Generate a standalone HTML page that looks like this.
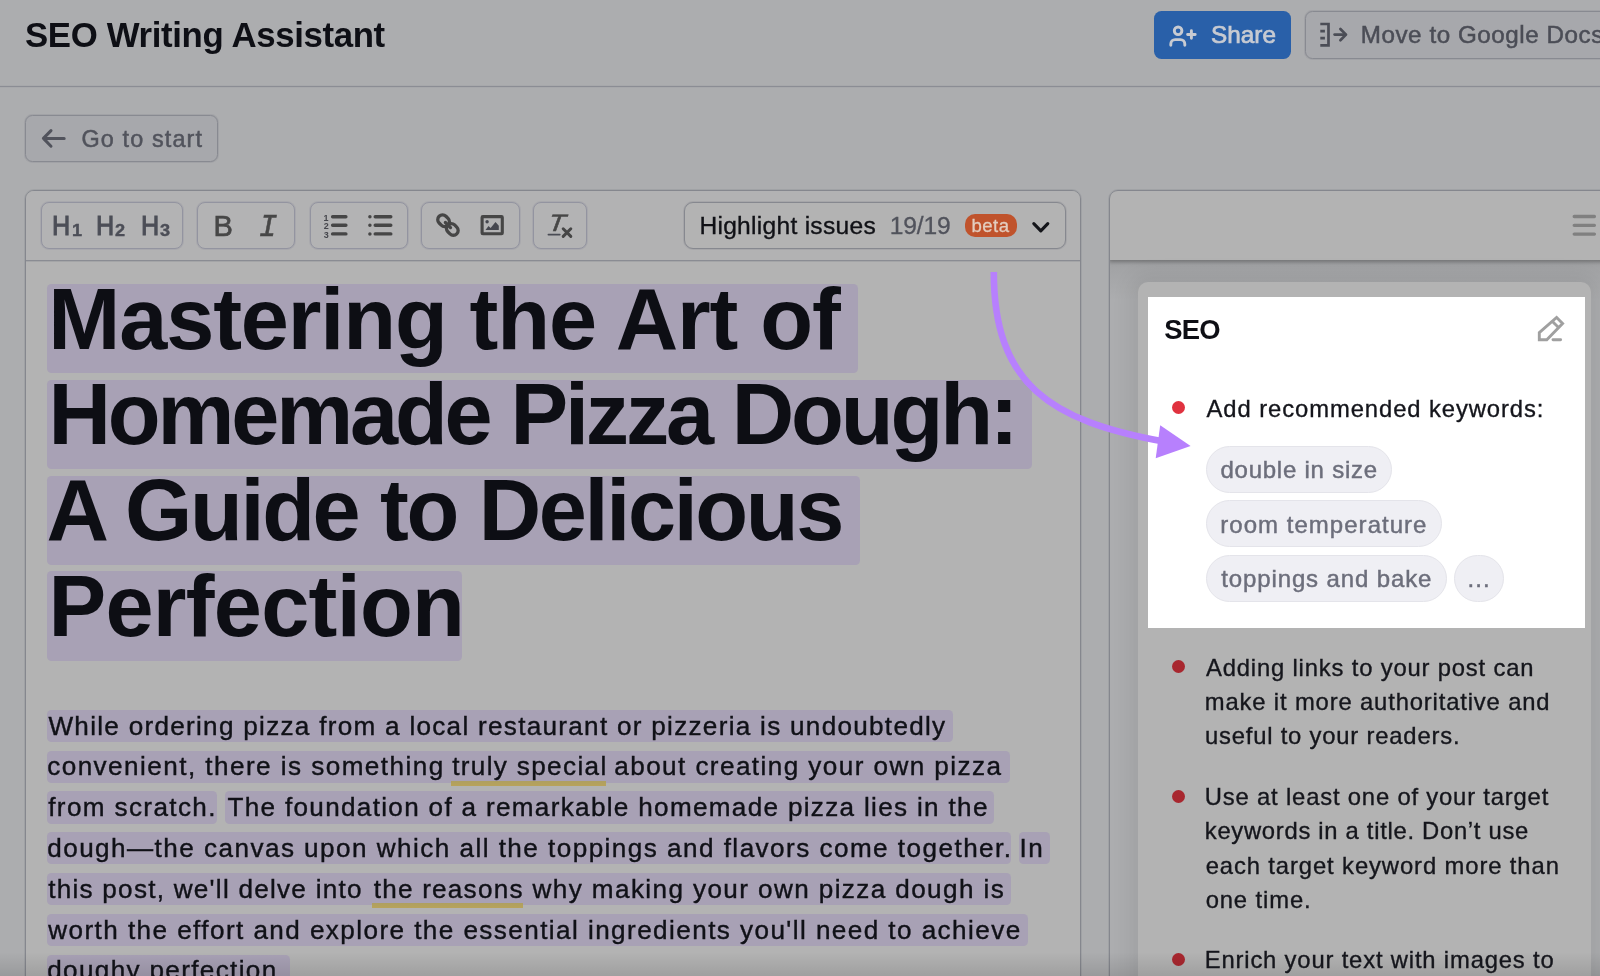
<!DOCTYPE html>
<html lang="en">
<head>
<meta charset="utf-8">
<title>SEO Writing Assistant</title>
<style>
*{box-sizing:border-box;margin:0;padding:0}
html,body{width:1600px;height:976px;overflow:hidden}
body{background:#acadaf;font-family:"Liberation Sans",sans-serif;color:#101117;position:relative}
.abs{position:absolute}
.t{position:absolute;white-space:nowrap}
#txt{position:absolute;left:0;top:0;width:1600px;height:976px;will-change:transform}
svg{position:absolute;overflow:visible}
#hline{left:0;top:86px;width:1600px;height:1px;background:#8b8d94;box-shadow:0 0 0 0.5px rgba(139,141,148,0.3)}
.btn{position:absolute;border:1px solid #888a91;border-radius:7.5px;box-shadow:0 0 0 1px rgba(120,122,130,0.2)}
#share{left:1154px;top:10.8px;width:137px;height:47.8px;background:#2960a9;border:none;box-shadow:none}
#gdocs{left:1305px;top:10.8px;width:320px;height:47.8px;background:#a7a8ac}
#gostart{left:25px;top:114.8px;width:192.8px;height:47.4px;background:#a7a8ac}

#editor{left:25px;top:190px;width:1056px;height:800px;border:1px solid #85878e;border-radius:9px;background:#b3b3b3;overflow:hidden;box-shadow:0 0 0 1px rgba(120,122,130,0.22)}
#toolbar{left:0;top:0;width:100%;height:70px;background:#b2b2b3;border-bottom:1px solid #8a8c93;box-shadow:0 1px 0 rgba(120,122,130,0.25)}
.grp{position:absolute;top:201.8px;height:47.2px;border:1px solid #9394a0;border-radius:8px;background:#b3b3b4;box-shadow:0 0 0 1px rgba(146,147,160,0.3)}
#dd{position:absolute;left:684px;top:202px;width:382px;height:47px;border:1px solid #86888f;box-shadow:0 0 0 1px rgba(120,122,130,0.2);border-radius:9px;background:#b3b3b3}
#beta{position:absolute;left:965px;top:214px;width:52px;height:23.2px;border-radius:10px;background:#c0532c}

.hl{position:absolute;background:#a8a1b5;border-radius:4.5px;height:89.4px;left:47px}
.pl{position:absolute;background:#a8a1b5;border-radius:4.5px;height:32.3px}
.ul{position:absolute;height:5px;background:linear-gradient(#ae9f61,#b8a35a)}

#rpanel{left:1109px;top:190px;width:520px;height:800px;border:1px solid #85878e;box-shadow:0 0 0 1px rgba(120,122,130,0.22);border-radius:9px;background:#acadaf;overflow:hidden}
#rhead{left:0;top:0;width:100%;height:69px;background:#b3b3b3;box-shadow:0 1px 4px 1px rgba(0,0,0,0.30)}
#rshade{left:0;top:69px;width:100%;height:40px;background:linear-gradient(#a0a1a3,rgba(160,161,163,0))}
#card{left:1138px;top:282px;width:453px;height:720px;border-radius:10px;background:#b3b3b3;box-shadow:0 0 20px 8px rgba(0,0,0,0.07)}
#white{left:1148.4px;top:296.8px;width:436.8px;height:331.2px;background:#fff}
.dot{position:absolute;width:13.3px;height:13.3px;border-radius:50%;background:#a8272f;left:1171.7px}
.chip{position:absolute;height:47px;border-radius:24px;background:#efeff4;border:1.5px solid #e4e4ea;left:1205.9px}
</style>
</head>
<body>
<!-- header -->
<div class="abs" id="hline"></div>
<div class="btn" id="share"></div>
<div class="btn" id="gdocs"></div>
<div class="btn" id="gostart"></div>

<!-- editor -->
<div class="abs" id="editor"><div class="abs" id="toolbar"></div></div>
<div class="grp" style="left:40.5px;width:142.5px"></div>
<div class="grp" style="left:197px;width:98px"></div>
<div class="grp" style="left:309.5px;width:98px"></div>
<div class="grp" style="left:421px;width:98.5px"></div>
<div class="grp" style="left:533px;width:54px"></div>
<div id="dd"></div>
<div id="beta"></div>

<!-- heading highlights -->
<div class="hl" style="top:284.1px;width:811px"></div>
<div class="hl" style="top:379.8px;width:985px"></div>
<div class="hl" style="top:475.5px;width:812.8px"></div>
<div class="hl" style="top:571.3px;width:415.4px"></div>

<!-- paragraph highlights -->
<div class="pl" style="top:709.8px;left:47.2px;width:906.3px"></div>
<div class="pl" style="top:750.6px;left:47.2px;width:962.8px"></div>
<div class="pl" style="top:791.4px;left:47.2px;width:170px"></div>
<div class="pl" style="top:791.4px;left:225.4px;width:769.1px"></div>
<div class="pl" style="top:832.2px;left:47.2px;width:964px"></div>
<div class="pl" style="top:832.2px;left:1019.4px;width:30.2px"></div>
<div class="pl" style="top:873px;left:47.2px;width:963.8px"></div>
<div class="pl" style="top:913.8px;left:47.2px;width:980.4px"></div>
<div class="pl" style="top:954.6px;left:47.2px;width:243px"></div>
<div class="ul" style="left:450.9px;top:781.1px;width:155.3px"></div>
<div class="ul" style="left:372px;top:903.2px;width:151.3px"></div>

<!-- right panel -->
<div class="abs" id="rpanel"><div class="abs" id="rshade"></div><div class="abs" id="rhead"></div></div>
<div class="abs" id="card"></div>
<div class="abs" id="white"></div>
<div class="dot" style="top:401px;background:#e0323f"></div>
<div class="dot" style="top:660.1px"></div>
<div class="dot" style="top:789.9px"></div>
<div class="dot" style="top:952.7px"></div>
<div class="chip" style="top:445.7px;width:186.5px"></div>
<div class="chip" style="top:500px;width:236px"></div>
<div class="chip" style="top:554.6px;width:240.8px"></div>
<div class="chip" style="top:554.6px;left:1453.9px;width:50.1px"></div>

<svg width="1600" height="976" viewBox="0 0 1600 976" style="left:0;top:0" fill="none" stroke-linecap="round" stroke-linejoin="round">
<!-- share icon -->
<g stroke="#c8cbd2" stroke-width="2.9">
<circle cx="1178.1" cy="30.8" r="3.8"/>
<path d="M1170.8 45.2v-1.2a4.4 4.4 0 0 1 4.4-4.4h5.2a4.4 4.4 0 0 1 4.4 4.4v1.2"/>
<path d="M1187.6 34.5h7.6M1191.4 30.7v7.6"/>
</g>
<!-- google docs icon -->
<g stroke="#4b4d56" stroke-width="2.7" stroke-linecap="butt" stroke-linejoin="miter">
<path d="M1320.3 24h8.2v21.4h-8.2"/>
<path d="M1320.3 31.1h4.6M1320.3 38.2h4.6"/>
<path d="M1334.6 34.6h10.6" stroke-linecap="round"/>
<path d="M1340.4 29l5.6 5.6-5.6 5.6" stroke-linecap="round" stroke-linejoin="round"/>
</g>
<!-- back arrow -->
<g stroke="#51535c" stroke-width="3">
<path d="M43.6 138.4h20.6M51 130.6l-7.6 7.8 7.6 7.8"/>
</g>
<!-- toolbar icons -->
<g stroke="#464646" stroke-width="3">
<path d="M332.6 216.7h13.3M332.6 225.3h13.3M332.6 233.9h13.3" stroke-width="3.4"/>
<path d="M375.2 216.7h15.6M375.2 225.3h15.6M375.2 233.9h15.6" stroke-width="3.4"/>
<path d="M369.9 216.7h.01M369.9 225.3h.01M369.9 233.9h.01" stroke-width="3.5"/>
<rect x="482.1" y="216.6" width="20.2" height="17.2" rx="0.8" stroke-width="3.1" stroke-linejoin="round"/>
<path d="M563.2 228.8l7.6 7.6M570.8 228.8l-7.6 7.6"/>
<path d="M548.4 234.6h11.4" stroke="#4a4c55" stroke-width="1.7" stroke-linecap="round"/>
</g>
<g fill="#45474f"><circle cx="487.1" cy="221.8" r="1.7"/><path d="M485.5 230l3-4.1 2.1 2.2 4.9-6 3.3 3.7v4.2z"/></g>
<!-- link icon -->
<g stroke="#464646" stroke-width="3.3" stroke-linejoin="round">
<rect x="-6.3" y="-4.8" width="12.6" height="9.6" rx="4.8" transform="translate(443.6 220.7) rotate(45)"/>
<rect x="-6.3" y="-4.8" width="12.6" height="9.6" rx="4.8" transform="translate(452.3 229.4) rotate(45)"/>
<path d="M445.4 222.5l5.1 5.1"/>
</g>
<!-- chevron -->
<path d="M1033.8 223.6l7 7.2 7-7.2" stroke="#14151a" stroke-width="3.1"/>
<!-- hamburger -->
<path d="M1574.2 216.5h20.2M1574.2 225.3h20.2M1574.2 234.1h20.2" stroke="#808080" stroke-width="3.3"/>
<!-- pencil -->
<g stroke="#a0a0a0" stroke-width="2.9" stroke-linejoin="miter">
<path d="M1539.3 332.6l17.3-15.2 6 6.2-15.8 16.2h-7.5z"/>
<path d="M1552.2 321.2l6.6 6.6" stroke-linecap="butt"/>
<path d="M1553 339.8h7.6"/>
</g>
<!-- purple arrow -->
<path d="M993.8 272C993.8 384 1050 421 1164 441.6" stroke="#b780fd" stroke-width="6.6" stroke-linecap="butt"/>
<path d="M1160.2 425.3L1190.6 446 1155.7 458.2z" fill="#b780fd"/>
</svg>

<div class="abs" style="left:0;top:952px;width:1600px;height:24px;background:linear-gradient(rgba(0,0,0,0),rgba(0,0,0,0.11))"></div>
<div id="txt">
<div class="t" style="left:25.02px;top:17.94px;font-size:34.8px;line-height:34.8px;color:#0e0f15;letter-spacing:-0.36px;font-weight:bold;">SEO Writing Assistant</div>
<div class="t" style="left:1210.94px;top:23.08px;font-size:24.3px;line-height:24.3px;color:#c8cbd2;letter-spacing:0.04px;-webkit-text-stroke:0.7px #c8cbd2;">Share</div>
<div class="t" style="left:1360.78px;top:23.16px;font-size:24.2px;line-height:24.2px;color:#4b4d56;letter-spacing:0.55px;-webkit-text-stroke:0.5px #4b4d56;">Move to Google Docs</div>
<div class="t" style="left:81.50px;top:128.24px;font-size:23.4px;line-height:23.4px;color:#51535c;letter-spacing:1.13px;-webkit-text-stroke:0.5px #51535c;">Go to start</div>
<div class="t" style="left:699.42px;top:213.62px;font-size:24.6px;line-height:24.6px;color:#101116;letter-spacing:0.27px;-webkit-text-stroke:0.35px #101116;">Highlight issues</div>
<div class="t" style="left:889.79px;top:213.62px;font-size:24.6px;line-height:24.6px;color:#51535c;letter-spacing:-0.15px;-webkit-text-stroke:0.3px #51535c;">19/19</div>
<div class="t" style="left:48.22px;top:275.78px;font-size:86.5px;line-height:86.5px;color:#0d0e14;letter-spacing:-1.12px;font-weight:bold;">Mastering the Art of</div>
<div class="t" style="left:48.53px;top:370.98px;font-size:86.5px;line-height:86.5px;color:#0d0e14;letter-spacing:-3.16px;font-weight:bold;">Homemade Pizza Dough:</div>
<div class="t" style="left:46.45px;top:467.18px;font-size:86.5px;line-height:86.5px;color:#0d0e14;letter-spacing:-2.35px;font-weight:bold;">A Guide to Delicious</div>
<div class="t" style="left:48.53px;top:562.98px;font-size:86.5px;line-height:86.5px;color:#0d0e14;letter-spacing:-0.73px;font-weight:bold;">Perfection</div>
<div class="t" style="left:48.43px;top:712.55px;font-size:26.1px;line-height:26.1px;color:#101117;letter-spacing:1.29px;-webkit-text-stroke:0.4px #101117;">While ordering pizza from a local restaurant or pizzeria is undoubtedly</div>
<div class="t" style="left:47.20px;top:752.75px;font-size:26.1px;line-height:26.1px;color:#101117;letter-spacing:1.45px;-webkit-text-stroke:0.4px #101117;">convenient, there is something</div>
<div class="t" style="left:452.14px;top:752.75px;font-size:26.1px;line-height:26.1px;color:#101117;letter-spacing:1.36px;-webkit-text-stroke:0.4px #101117;">truly special</div>
<div class="t" style="left:614.26px;top:752.75px;font-size:26.1px;line-height:26.1px;color:#101117;letter-spacing:1.43px;-webkit-text-stroke:0.4px #101117;">about creating your own pizza</div>
<div class="t" style="left:48.22px;top:794.35px;font-size:26.1px;line-height:26.1px;color:#101117;letter-spacing:1.37px;-webkit-text-stroke:0.4px #101117;">from scratch.</div>
<div class="t" style="left:227.45px;top:794.35px;font-size:26.1px;line-height:26.1px;color:#101117;letter-spacing:1.32px;-webkit-text-stroke:0.4px #101117;">The foundation of a remarkable homemade pizza lies in the</div>
<div class="t" style="left:47.20px;top:834.55px;font-size:26.1px;line-height:26.1px;color:#101117;letter-spacing:1.46px;-webkit-text-stroke:0.4px #101117;">dough—the canvas upon which all the toppings and flavors come together.</div>
<div class="t" style="left:1019.51px;top:834.55px;font-size:26.1px;line-height:26.1px;color:#101117;letter-spacing:1.52px;-webkit-text-stroke:0.4px #101117;">In</div>
<div class="t" style="left:48.20px;top:875.75px;font-size:26.1px;line-height:26.1px;color:#101117;letter-spacing:1.26px;-webkit-text-stroke:0.4px #101117;">this post, we'll delve into</div>
<div class="t" style="left:373.69px;top:875.75px;font-size:26.1px;line-height:26.1px;color:#101117;letter-spacing:1.24px;-webkit-text-stroke:0.4px #101117;">the reasons</div>
<div class="t" style="left:532.58px;top:875.75px;font-size:26.1px;line-height:26.1px;color:#101117;letter-spacing:1.40px;-webkit-text-stroke:0.4px #101117;">why making your own pizza dough is</div>
<div class="t" style="left:48.25px;top:916.55px;font-size:26.1px;line-height:26.1px;color:#101117;letter-spacing:1.43px;-webkit-text-stroke:0.4px #101117;">worth the effort and explore the essential ingredients you'll need to achieve</div>
<div class="t" style="left:47.20px;top:956.75px;font-size:26.1px;line-height:26.1px;color:#101117;letter-spacing:1.35px;-webkit-text-stroke:0.4px #101117;">doughy perfection.</div>
<div class="t" style="left:1164.36px;top:316.41px;font-size:27.4px;line-height:27.4px;color:#0e0f15;letter-spacing:-0.81px;font-weight:bold;">SEO</div>
<div class="t" style="left:1206.58px;top:397.11px;font-size:23.8px;line-height:23.8px;color:#14151b;letter-spacing:0.92px;-webkit-text-stroke:0.35px #15161c;">Add recommended keywords:</div>
<div class="t" style="left:1220.40px;top:457.73px;font-size:24px;line-height:24px;color:#6c6e7b;letter-spacing:0.77px;-webkit-text-stroke:0.45px #6c6e7b;">double in size</div>
<div class="t" style="left:1220.27px;top:512.53px;font-size:24px;line-height:24px;color:#6c6e7b;letter-spacing:1.03px;-webkit-text-stroke:0.45px #6c6e7b;">room temperature</div>
<div class="t" style="left:1221.29px;top:566.93px;font-size:24px;line-height:24px;color:#6c6e7b;letter-spacing:0.87px;-webkit-text-stroke:0.45px #6c6e7b;">toppings and bake</div>
<div class="t" style="left:1467.49px;top:566.93px;font-size:24px;line-height:24px;color:#6c6e7b;letter-spacing:1.15px;-webkit-text-stroke:0.45px #6c6e7b;">...</div>
<div class="t" style="left:1205.99px;top:655.90px;font-size:23.8px;line-height:23.8px;color:#15161c;letter-spacing:0.83px;-webkit-text-stroke:0.35px #15161c;">Adding links to your post can</div>
<div class="t" style="left:1204.82px;top:689.71px;font-size:23.8px;line-height:23.8px;color:#15161c;letter-spacing:0.85px;-webkit-text-stroke:0.35px #15161c;">make it more authoritative and</div>
<div class="t" style="left:1204.92px;top:723.71px;font-size:23.8px;line-height:23.8px;color:#15161c;letter-spacing:0.81px;-webkit-text-stroke:0.35px #15161c;">useful to your readers.</div>
<div class="t" style="left:1204.87px;top:785.11px;font-size:23.8px;line-height:23.8px;color:#15161c;letter-spacing:0.82px;-webkit-text-stroke:0.35px #15161c;">Use at least one of your target</div>
<div class="t" style="left:1204.82px;top:819.11px;font-size:23.8px;line-height:23.8px;color:#15161c;letter-spacing:0.71px;-webkit-text-stroke:0.35px #15161c;">keywords in a title. Don’t use</div>
<div class="t" style="left:1205.64px;top:853.90px;font-size:23.8px;line-height:23.8px;color:#15161c;letter-spacing:0.90px;-webkit-text-stroke:0.35px #15161c;">each target keyword more than</div>
<div class="t" style="left:1205.64px;top:887.90px;font-size:23.8px;line-height:23.8px;color:#15161c;letter-spacing:0.89px;-webkit-text-stroke:0.35px #15161c;">one time.</div>
<div class="t" style="left:1204.75px;top:947.70px;font-size:23.8px;line-height:23.8px;color:#15161c;letter-spacing:0.83px;-webkit-text-stroke:0.35px #15161c;">Enrich your text with images to</div>
<div class="t" style="left:52.22px;top:212.01px;font-size:27.4px;line-height:27.4px;color:#4c4e57;-webkit-text-stroke:1px #4c4e57;transform:scaleX(0.92);transform-origin:0 0;">H</div>
<div class="t" style="left:96.02px;top:212.01px;font-size:27.4px;line-height:27.4px;color:#4c4e57;-webkit-text-stroke:1px #4c4e57;transform:scaleX(0.92);transform-origin:0 0;">H</div>
<div class="t" style="left:140.82px;top:212.01px;font-size:27.4px;line-height:27.4px;color:#4c4e57;-webkit-text-stroke:1px #4c4e57;transform:scaleX(0.92);transform-origin:0 0;">H</div>
<div class="t" style="left:71.91px;top:222.83px;font-size:16.8px;line-height:16.8px;color:#4c4e57;font-weight:bold;-webkit-text-stroke:0.4px #4c4e57;transform:scaleX(1.08);transform-origin:0 0;">1</div>
<div class="t" style="left:114.84px;top:222.83px;font-size:16.8px;line-height:16.8px;color:#4c4e57;font-weight:bold;-webkit-text-stroke:0.4px #4c4e57;transform:scaleX(1.08);transform-origin:0 0;">2</div>
<div class="t" style="left:159.84px;top:222.83px;font-size:16.8px;line-height:16.8px;color:#4c4e57;font-weight:bold;-webkit-text-stroke:0.4px #4c4e57;transform:scaleX(1.08);transform-origin:0 0;">3</div>
<div class="t" style="left:213.38px;top:211.50px;font-size:29px;line-height:29px;color:#474747;-webkit-text-stroke:0.7px #474747;">B</div>
<div class="t" style="left:258.87px;top:211.81px;font-size:31px;line-height:31px;color:#474747;font-style:italic;font-family:'Liberation Mono',monospace;-webkit-text-stroke:0.5px #474747;">I</div>
<div class="t" style="left:546.86px;top:206.77px;font-size:27.5px;line-height:27.5px;color:#464646;font-style:italic;-webkit-text-stroke:0.65px #464646;transform:scaleY(0.86) skewX(-7deg);transform-origin:0 100%;">T</div>
<div class="t" style="left:323.47px;top:213.78px;font-size:9px;line-height:9px;color:#45464c;font-weight:bold;">1</div>
<div class="t" style="left:323.79px;top:221.78px;font-size:9px;line-height:9px;color:#45464c;font-weight:bold;">2</div>
<div class="t" style="left:323.75px;top:230.78px;font-size:9px;line-height:9px;color:#45464c;font-weight:bold;">3</div>
<div class="t" style="left:971.50px;top:216.73px;font-size:18.6px;line-height:18.6px;color:#e3cdbf;letter-spacing:0.46px;-webkit-text-stroke:0.3px #e3cdbf;">beta</div>
</div>
</body>
</html>
